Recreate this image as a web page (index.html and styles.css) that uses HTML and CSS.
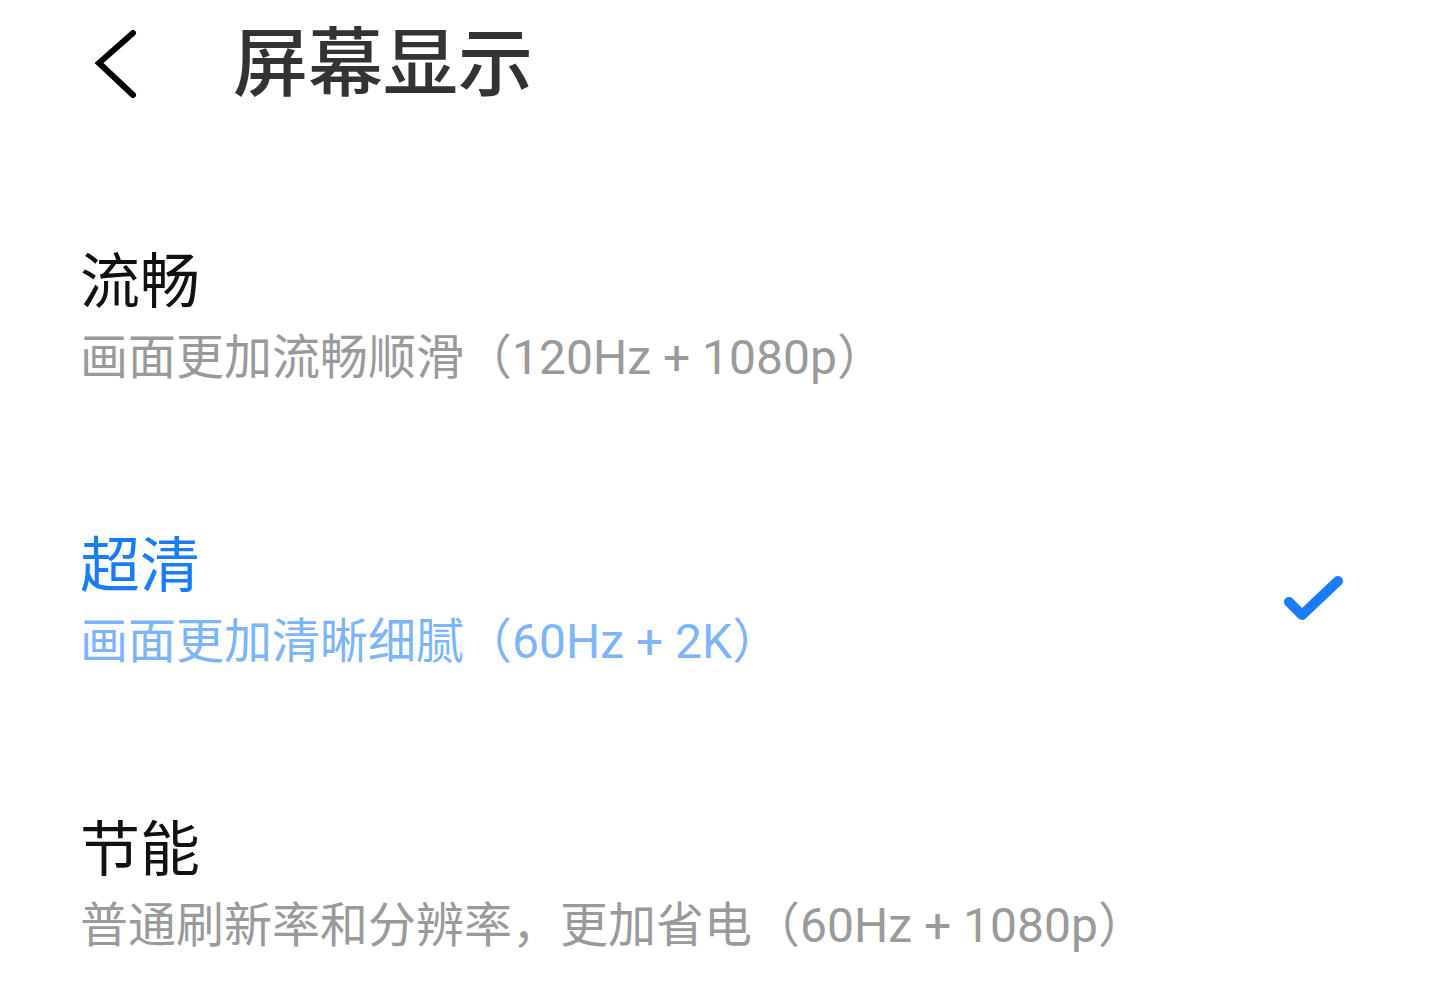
FILE: index.html
```html
<!DOCTYPE html>
<html lang="zh-CN">
<head>
<meta charset="utf-8">
<title>屏幕显示</title>
<link rel="stylesheet" href="styles.css">
</head>
<body>
<header class="header">
  <svg class="back" width="48" height="75" viewBox="0 0 48 75" aria-hidden="true">
    <path d="M41 8 L7 38 L41 70" fill="none" stroke="#000" stroke-width="6" stroke-linecap="round" stroke-linejoin="miter"/>
  </svg>
  <h1 class="title">屏幕显示</h1>
</header>
<main class="list">
  <div class="item">
    <div class="text">
      <div class="name">流畅</div>
      <div class="desc">画面更加流畅顺滑（120Hz + 1080p）</div>
    </div>
  </div>
  <div class="item selected">
    <div class="text">
      <div class="name">超清</div>
      <div class="desc">画面更加清晰细腻（60Hz + 2K）</div>
    </div>
    <svg class="check" width="70" height="56" viewBox="0 0 70 56" aria-hidden="true">
      <path d="M10 31 L23 44 L59 10" fill="none" stroke="#1a7df8" stroke-width="10" stroke-linecap="round" stroke-linejoin="round"/>
    </svg>
  </div>
  <div class="item">
    <div class="text">
      <div class="name">节能</div>
      <div class="desc">普通刷新率和分辨率，更加省电（60Hz + 1080p）</div>
    </div>
  </div>
</main>
</body>
</html>
```
FILE: styles.css
```css
html, body {
  margin: 0;
  padding: 0;
  background: #ffffff;
}
body {
  width: 1440px;
  height: 989px;
  overflow: hidden;
  font-family: Roboto, "Noto Sans CJK SC", sans-serif;
}
.header {
  display: flex;
  align-items: center;
  height: 125px;
}
.back {
  display: block;
  margin-left: 92px;
  flex: none;
}
.title {
  margin: 0 0 0 93px;
  font-family: "Noto Sans CJK SC", sans-serif;
  font-size: 75px;
  font-weight: 500;
  line-height: 75px;
  color: #333333;
  position: relative;
  top: -5px;
}
.list {
  display: flex;
  flex-direction: column;
  gap: 138px;
  padding: 117px 91px 0 80px;
}
.item {
  display: flex;
  align-items: center;
  justify-content: space-between;
}
.name {
  font-family: "Noto Sans CJK SC", sans-serif;
  font-size: 60px;
  line-height: 70px;
  color: #111111;
}
.desc {
  margin-top: 16px;
  font-size: 48px;
  line-height: 60px;
  color: #9a9a9a;
  white-space: nowrap;
}
.selected .name {
  color: #1a7df8;
}
.selected .desc {
  color: #7cb5fa;
}
.check {
  display: block;
  flex: none;
}
```
